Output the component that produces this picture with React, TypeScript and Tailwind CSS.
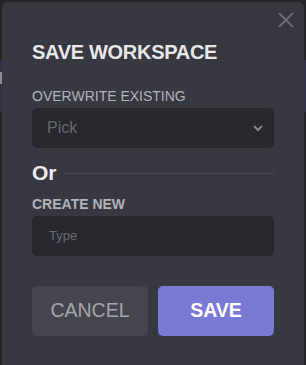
import React from "react";

export default function App() {
  return (
    <div
      className="relative w-[306px] h-[365px] overflow-hidden bg-[#232328]"
      style={{ fontFamily: "'Liberation Sans', Arial, sans-serif" }}
    >
      <div className="absolute left-0 right-0 top-[60px] h-[52px] bg-[#33324d]" />
      <div className="absolute left-0 w-[2px] top-[72px] h-[12px] bg-[#8a8a92]" />
      <div className="relative mx-[2px] mt-[2px] h-[380px] rounded-[6px] bg-[#383841] px-[30px] pt-[38px]">
        <button className="absolute right-[10px] top-[10px] text-[#6e6e77]">
          <svg width="16" height="16" viewBox="0 0 16 16" fill="none" stroke="currentColor" strokeWidth="1.8">
            <path d="M1 1L15 15M15 1L1 15" />
          </svg>
        </button>
        <h1 className="text-[20px] leading-[24px] font-bold tracking-[-0.3px] text-[#e8e8ea]">SAVE WORKSPACE</h1>
        <div className="mt-[24px] text-[14px] leading-[16px] text-[#b2b2b8]">OVERWRITE EXISTING</div>
        <div className="mt-[4px] flex h-[40px] items-center justify-between rounded-[5px] bg-[#27272d] pl-[15px] pr-[11px]">
          <span className="text-[16px] text-[#6a6a73]">Pick</span>
          <svg width="10" height="8" viewBox="0 0 10 8" fill="none" stroke="#85858d" strokeWidth="2">
            <path d="M1 2L5 6L9 2" />
          </svg>
        </div>
        <div className="mt-[13px] flex items-center gap-[8px]">
          <span className="text-[21px] leading-[24px] font-bold text-[#ececee]">Or</span>
          <div className="h-px flex-1 bg-[#4c4c55]" />
        </div>
        <div className="mt-[11px] text-[14px] leading-[16px] font-bold text-[#b2b2b8]">CREATE NEW</div>
        <div className="mt-[4px] flex h-[40px] items-center rounded-[5px] bg-[#27272d] pl-[17px]">
          <span className="text-[13px] text-[#6a6a73]">Type</span>
        </div>
        <div className="mt-[30px] flex gap-[10px]">
          <button className="flex h-[50px] flex-1 items-center justify-center rounded-[5px] bg-[#45454e] text-[19.5px] text-[#a6a6ac]">
            CANCEL
          </button>
          <button className="flex h-[50px] flex-1 items-center justify-center rounded-[5px] bg-[#7b79d6] text-[19.5px] font-bold text-white">
            SAVE
          </button>
        </div>
      </div>
    </div>
  );
}
